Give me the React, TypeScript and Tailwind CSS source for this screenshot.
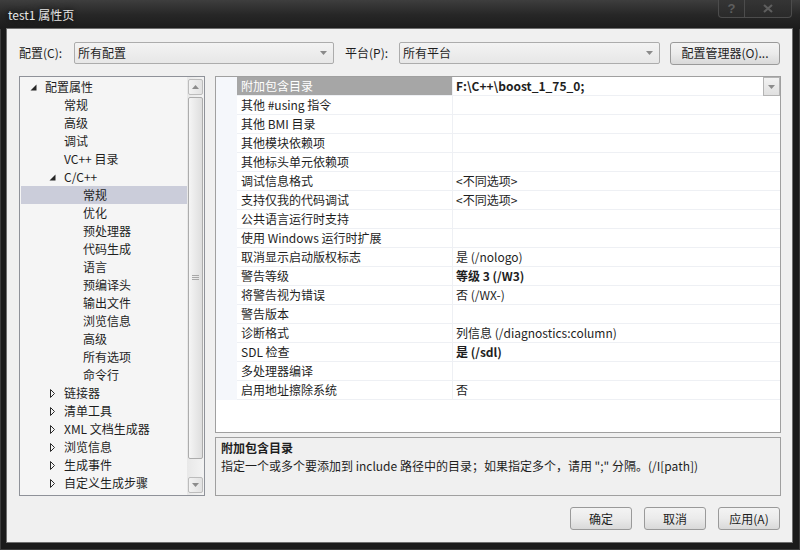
import React from 'react';

type TreeItem = { label: string; level: 0 | 1 | 2; arrow?: 'open' | 'closed'; selected?: boolean };

const treeItems: TreeItem[] = [
  { label: '配置属性', level: 0, arrow: 'open' },
  { label: '常规', level: 1 },
  { label: '高级', level: 1 },
  { label: '调试', level: 1 },
  { label: 'VC++ 目录', level: 1 },
  { label: 'C/C++', level: 1, arrow: 'open' },
  { label: '常规', level: 2, selected: true },
  { label: '优化', level: 2 },
  { label: '预处理器', level: 2 },
  { label: '代码生成', level: 2 },
  { label: '语言', level: 2 },
  { label: '预编译头', level: 2 },
  { label: '输出文件', level: 2 },
  { label: '浏览信息', level: 2 },
  { label: '高级', level: 2 },
  { label: '所有选项', level: 2 },
  { label: '命令行', level: 2 },
  { label: '链接器', level: 1, arrow: 'closed' },
  { label: '清单工具', level: 1, arrow: 'closed' },
  { label: 'XML 文档生成器', level: 1, arrow: 'closed' },
  { label: '浏览信息', level: 1, arrow: 'closed' },
  { label: '生成事件', level: 1, arrow: 'closed' },
  { label: '自定义生成步骤', level: 1, arrow: 'closed' },
];

const indent = ['pl-[5px]', 'pl-[24px]', 'pl-[43px]'];

type Prop = { name: string; value?: string; bold?: boolean; selected?: boolean };

const props: Prop[] = [
  { name: '附加包含目录', value: 'F:\\C++\\boost_1_75_0;', bold: true, selected: true },
  { name: '其他 #using 指令' },
  { name: '其他 BMI 目录' },
  { name: '其他模块依赖项' },
  { name: '其他标头单元依赖项' },
  { name: '调试信息格式', value: '<不同选项>' },
  { name: '支持仅我的代码调试', value: '<不同选项>' },
  { name: '公共语言运行时支持' },
  { name: '使用 Windows 运行时扩展' },
  { name: '取消显示启动版权标志', value: '是 (/nologo)' },
  { name: '警告等级', value: '等级 3 (/W3)', bold: true },
  { name: '将警告视为错误', value: '否 (/WX-)' },
  { name: '警告版本' },
  { name: '诊断格式', value: '列信息 (/diagnostics:column)' },
  { name: 'SDL 检查', value: '是 (/sdl)', bold: true },
  { name: '多处理器编译' },
  { name: '启用地址擦除系统', value: '否' },
];

function DownTri({ color = '#8a8a8a' }: { color?: string }) {
  return (
    <svg width="7" height="4" viewBox="0 0 7 4">
      <polygon points="0,0 7,0 3.5,4" fill={color} />
    </svg>
  );
}

function TreeArrow({ kind }: { kind?: 'open' | 'closed' }) {
  if (kind === 'open') {
    return (
      <svg width="19" height="18" viewBox="0 0 19 18" className="shrink-0">
        <polygon points="10.5,6.5 10.5,12.5 4.5,12.5" fill="#262626" />
      </svg>
    );
  }
  if (kind === 'closed') {
    return (
      <svg width="19" height="18" viewBox="0 0 19 18" className="shrink-0">
        <polygon points="5.5,5.5 5.5,13.5 9.5,9.5" fill="none" stroke="#2a2a2a" strokeWidth="1" />
      </svg>
    );
  }
  return <span className="w-[19px] shrink-0" />;
}

function Combo({ value, width }: { value: string; width: string }) {
  return (
    <div
      className={`${width} h-[22px] flex items-center justify-between pl-[3px] pr-[6px] border border-[#acacac] rounded-[2px] bg-gradient-to-b from-[#f3f3f3] to-[#e7e7e7]`}
    >
      <span className="leading-none">{value}</span>
      <DownTri />
    </div>
  );
}

function Button({ label, width }: { label: string; width: string }) {
  return (
    <div
      className={`${width} h-[23px] flex items-center justify-center border border-[#9a9a9a] rounded-[3px] bg-gradient-to-b from-[#f4f4f4] via-[#ebebeb] to-[#d9d9d9] leading-none`}
    >
      {label}
    </div>
  );
}

function ScrollButton({ up }: { up?: boolean }) {
  return (
    <div className="h-[16px] mx-[1px] flex items-center justify-center border border-[#bcbcbc] rounded-[2px] bg-gradient-to-r from-[#f2f2f2] to-[#e2e2e2]">
      <svg width="7" height="4" viewBox="0 0 7 4">
        <polygon points={up ? '0,4 7,4 3.5,0' : '0,0 7,0 3.5,4'} fill="#8c8c8c" />
      </svg>
    </div>
  );
}

export default function App() {
  return (
    <div className="w-[800px] h-[550px] flex flex-col bg-[#1b1b1b] shadow-[inset_0_0_0_1px_#3c3c3c] font-['Noto_Sans_CJK_SC',sans-serif] text-[12px] text-[#1e1e1e] overflow-hidden">
      {/* Title bar */}
      <div className="h-[29px] shrink-0 flex justify-between bg-gradient-to-b from-[#3e3e3e] via-[#272727] to-[#1b1b1b]">
        <div className="self-center pl-[8px] pt-[1px] text-[12px] text-[#e6e6e6] [text-shadow:0_0_6px_#000]">
          test1 属性页
        </div>
        <div className="flex h-[18px] mr-[8px]">
          <div className="w-[27px] h-full flex items-center justify-center border border-t-0 border-[#4c4c4c] rounded-bl-[4px] bg-gradient-to-b from-[#353535] to-[#2a2a2a] text-[#5e5e5e] text-[13px] font-bold font-['Liberation_Sans',sans-serif]">
            ?
          </div>
          <div className="w-[47px] h-full flex items-center justify-center border border-t-0 border-l-0 border-[#4c4c4c] rounded-br-[4px] bg-gradient-to-b from-[#353535] to-[#2a2a2a]">
            <svg width="10" height="9" viewBox="0 0 10 9">
              <path d="M1 1 L9 8 M9 1 L1 8" stroke="#5e5e5e" strokeWidth="2.2" />
            </svg>
          </div>
        </div>
      </div>

      {/* Client area */}
      <div className="flex-1 ml-[7px] mr-[8px] mb-[8px] flex flex-col pl-[12px] pr-[11px] pt-[12px] pb-[12px] bg-[#f0f0f0] shadow-[0_0_0_1px_#6e6e6e]">
        {/* Top row */}
        <div className="h-[24px] flex items-center">
          <span className="w-[55px]">配置(C):</span>
          <Combo value="所有配置" width="w-[260px]" />
          <span className="ml-[11px] w-[54px]">平台(P):</span>
          <Combo value="所有平台" width="w-[261px]" />
          <div className="ml-[10px]">
            <Button label="配置管理器(O)..." width="w-[110px]" />
          </div>
        </div>

        {/* Main */}
        <div className="mt-[11px] h-[420px] flex gap-[10px]">
          {/* Tree */}
          <div className="w-[186px] h-full flex border border-[#8f9299] bg-[#f5f5f5]">
            <div className="w-[167px] pl-[1px] pt-[1px] flex flex-col">
              {treeItems.map((item, i) => (
                <div
                  key={i}
                  className={`h-[18px] flex items-center ${indent[item.level]} ${item.selected ? 'bg-[#cbcdda]' : ''}`}
                >
                  <TreeArrow kind={item.arrow} />
                  <span className="leading-none whitespace-nowrap">{item.label}</span>
                </div>
              ))}
            </div>
            <div className="w-[17px] flex flex-col pt-[2px] pb-[2px] bg-gradient-to-r from-[#e8e8e8] to-[#f3f3f3]">
              <ScrollButton up />
              <div className="mt-[2px] h-[362px] mx-[1px] flex items-center justify-center border border-[#acacac] rounded-[2px] bg-gradient-to-r from-[#f5f5f5] to-[#dedede]">
                <svg width="7" height="6" viewBox="0 0 7 6">
                  <path d="M0 0.5 H7 M0 2.5 H7 M0 4.5 H7" stroke="#a8a8a8" strokeWidth="1" />
                </svg>
              </div>
              <div className="flex-1" />
              <ScrollButton />
            </div>
          </div>

          {/* Right column */}
          <div className="flex-1 h-full flex flex-col gap-[4px]">
            <div className="h-[357px] border border-[#a0a0a0] bg-white flex flex-col">
              {props.map((p, i) => (
                <div key={i} className="h-[19px] flex">
                  <div className="w-[21px] bg-[#f5f7fb]" />
                  <div
                    className={`w-[215px] flex items-center pl-[4px] border-b border-[#eef0f4] ${p.selected ? 'bg-[#a6a6a6] text-white border-[#a6a6a6]' : ''}`}
                  >
                    <span className="leading-none whitespace-nowrap">{p.name}</span>
                  </div>
                  <div className="flex-1 flex items-center justify-between pl-[3px] border-l border-b border-[#eef0f4]">
                    <span className={`leading-none whitespace-nowrap ${p.bold ? 'font-bold' : ''}`}>{p.value ?? ''}</span>
                    {p.selected && (
                      <div className="w-[17px] h-[19px] -mb-[1px] flex items-center justify-center border border-[#b4b4b4] bg-gradient-to-b from-[#f2f2f2] to-[#e0e0e0]">
                        <DownTri color="#8c8c8c" />
                      </div>
                    )}
                  </div>
                </div>
              ))}
            </div>
            <div className="flex-1 border border-[#a0a0a0] bg-[#f0f0f0] px-[5px] pt-[1px]">
              <div className="h-[18px] flex items-center font-bold leading-none">附加包含目录</div>
              <div className="h-[18px] flex items-center leading-none whitespace-nowrap">
                指定一个或多个要添加到 include 路径中的目录；如果指定多个，请用 ";" 分隔。(/I[path])
              </div>
            </div>
          </div>
        </div>

        {/* Bottom buttons */}
        <div className="mt-[11px] flex justify-end gap-[12px] pr-[1px]">
          <Button label="确定" width="w-[62px]" />
          <Button label="取消" width="w-[62px]" />
          <Button label="应用(A)" width="w-[62px]" />
        </div>
      </div>
    </div>
  );
}
